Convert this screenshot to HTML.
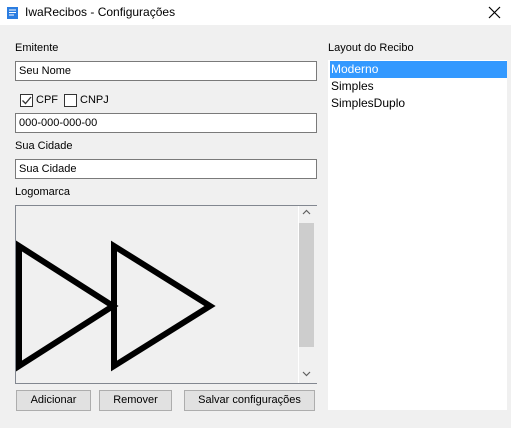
<!DOCTYPE html>
<html><head><style>
body{margin:0;width:511px;height:428px;background:#f0f0f0;font-family:"Liberation Sans",sans-serif;font-size:11px;color:#000;position:relative;overflow:hidden}
.a{position:absolute}
.title{left:0;top:0;width:511px;height:25px;background:#fff}
.inp{background:#fff;border:1px solid #7a7a7a;box-sizing:border-box;height:20px;padding:3px 0 0 3px;width:302px;left:15px}
.cb{width:13px;height:13px;border:1px solid #333;box-sizing:border-box;background:#fff}
.btn{background:#e1e1e1;border:1px solid #adadad;box-sizing:border-box;height:21px;text-align:center;line-height:19px}
.li{left:330px;width:176px;height:17px;line-height:17px;padding-left:1px;font-size:12px}
</style></head><body>
<div class="a title"></div>
<svg class="a" style="left:6px;top:6px" width="13" height="14" viewBox="0 0 13 14"><rect x="1" y="1" width="11" height="12" fill="#2b7de1"/><path d="M3 4h7M3 6.5h7M3 9h5" stroke="#fff" stroke-width="1"/></svg>
<div class="a" style="left:25px;top:5px;font-size:12px">IwaRecibos - Configurações</div>
<svg class="a" style="left:488px;top:6px" width="13" height="13"><path d="M1 1L12 12M12 1L1 12" stroke="#000" stroke-width="1.2"/></svg>

<div class="a" style="left:15px;top:42px">Emitente</div>
<div class="a inp" style="top:61px">Seu Nome</div>
<div class="a cb" style="left:20px;top:94px"></div>
<svg class="a" style="left:21px;top:95px" width="11" height="11"><path d="M1.5 5.5L4.5 8.5L10 2" stroke="#333" stroke-width="1.3" fill="none"/></svg>
<div class="a" style="left:36px;top:94px">CPF</div>
<div class="a cb" style="left:64px;top:94px"></div>
<div class="a" style="left:80px;top:94px">CNPJ</div>
<div class="a inp" style="top:113px">000-000-000-00</div>
<div class="a" style="left:15px;top:140px">Sua Cidade</div>
<div class="a inp" style="top:159px">Sua Cidade</div>
<div class="a" style="left:15px;top:186px">Logomarca</div>

<div class="a" style="left:15px;top:205px;width:302px;height:179px;border:1px solid #828790;box-sizing:border-box;background:#f0f0f0"></div>
<svg class="a" style="left:16px;top:206px" width="282" height="177"><path d="M3 40V160L97 100Z M98 40V160L194 100Z" fill="none" stroke="#000" stroke-width="6" stroke-linejoin="miter"/></svg>
<div class="a" style="left:298px;top:206px;width:18px;height:177px;background:#f0f0f0;border-left:1px solid #fff"></div>
<div class="a" style="left:299px;top:223px;width:15px;height:124px;background:#cdcdcd"></div>
<svg class="a" style="left:302px;top:209px" width="9" height="6"><path d="M1 5L4.5 1.5L8 5" stroke="#606060" fill="none" stroke-width="1.2"/></svg>
<svg class="a" style="left:302px;top:371px" width="9" height="6"><path d="M1 1L4.5 4.5L8 1" stroke="#606060" fill="none" stroke-width="1.2"/></svg>

<div class="a btn" style="left:16px;top:390px;width:75px">Adicionar</div>
<div class="a btn" style="left:99px;top:390px;width:73px">Remover</div>
<div class="a btn" style="left:184px;top:390px;width:131px">Salvar configurações</div>

<div class="a" style="left:328px;top:42px">Layout do Recibo</div>
<div class="a" style="left:328px;top:60px;width:179px;height:350px;background:#fff"></div>
<div class="a li" style="top:61px;background:#3399ff;color:#fff">Moderno</div>
<div class="a li" style="top:78px">Simples</div>
<div class="a li" style="top:95px">SimplesDuplo</div>
</body></html>
